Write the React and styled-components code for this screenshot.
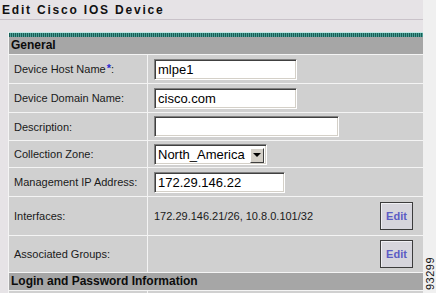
import React from "react";
import styled, { createGlobalStyle } from "styled-components";

const Global = createGlobalStyle`
  html, body {
    margin: 0;
    padding: 0;
    background: #efeeef;
  }
  body {
    font-family: "Liberation Sans", Arial, sans-serif;
    color: #111;
  }
`;

const Page = styled.div`
  display: flex;
  width: 436px;
  height: 293px;
  overflow: hidden;
`;

const Main = styled.div`
  width: 423px;
  background: #e6e3e6;
  overflow: hidden;
`;

const Side = styled.div`
  flex: 1;
  background: #f0f0f0;
  display: flex;
  align-items: flex-end;
  justify-content: center;
  padding-bottom: 3px;
`;

const FigNo = styled.span`
  writing-mode: vertical-rl;
  transform: rotate(180deg);
  font-size: 11px;
  letter-spacing: 0.5px;
  color: #111;
`;

const Title = styled.h1`
  margin: 0;
  height: 20px;
  box-sizing: border-box;
  padding: 3px 0 0 2px;
  font-size: 12px;
  font-weight: bold;
  letter-spacing: 1.8px;
  border-bottom: 1px solid #c9c2c9;
  color: #111;
`;

const Panel = styled.div`
  margin: 12px 0 0 8px;
  border-left: 1px solid #f4f4f4;
`;

const Stripe = styled.div`
  height: 4px;
  border-top: 1px solid #bfe6e2;
  background: repeating-linear-gradient(
    90deg,
    #175f57 0px,
    #175f57 1px,
    #4f9f96 1px,
    #4f9f96 2px
  );
`;

const Section = styled.div`
  height: 17px;
  background: #a6a6a6;
  border-bottom: 1px solid #f4f4f4;
  padding-left: 2px;
  font-size: 12px;
  font-weight: bold;
  line-height: 17px;
  color: #0c0c0c;
`;

const Row = styled.div`
  display: grid;
  grid-template-columns: 139px 1fr;
  height: ${(p) => p.$h}px;
  background: #d0d0d0;
  border-bottom: 1px solid #f4f4f4;
`;

const Label = styled.div`
  display: flex;
  align-items: center;
  padding-left: 5px;
  font-size: 11px;
  color: #1a1a1a;
  border-right: 1px solid #f4f4f4;
`;

const Star = styled.sup`
  color: #2a2ad0;
  font-size: 11px;
  font-weight: bold;
  line-height: 0;
  margin-left: 1px;
  position: relative;
  top: -1px;
`;

const Value = styled.div`
  display: flex;
  align-items: center;
  padding-left: 6px;
  padding-right: 10px;
  font-size: 11px;
  color: #1a1a1a;
`;

const Field = styled.div`
  width: ${(p) => p.$w}px;
  height: 21px;
  box-sizing: border-box;
  background: #fff;
  border: 1px solid;
  border-color: #808080 #fff #fff #808080;
  box-shadow: inset 1px 1px #404040, inset -1px -1px #d4d0c8;
  padding: 2px 0 0 3px;
  font-size: 13px;
  line-height: 16px;
  color: #000;
  display: flex;
  align-items: center;
`;

const SelectBox = styled(Field)`
  padding-right: 2px;
  justify-content: space-between;
`;

const Arrow = styled.div`
  width: 14px;
  height: 15px;
  box-sizing: border-box;
  background: #d4d0c8;
  border: 1px solid;
  border-color: #fff #404040 #404040 #fff;
  display: flex;
  align-items: center;
  justify-content: center;
  &::after {
    content: "";
    border-left: 4px solid transparent;
    border-right: 4px solid transparent;
    border-top: 4px solid #000;
  }
`;

const Text = styled.span`
  flex: 1;
`;

const EditButton = styled.button`
  width: 33px;
  height: 28px;
  background: #d6d5dc;
  border: 1px solid #3c3c3c;
  box-shadow: inset 1px 1px #f0f0f4;
  font-family: "Liberation Sans", Arial, sans-serif;
  font-size: 11px;
  font-weight: bold;
  color: #5b5bc4;
  padding: 0;
  margin-left: auto;
`;

export default function App() {
  return (
    <>
      <Global />
      <Page>
        <Main>
          <Title>Edit Cisco IOS Device</Title>
          <Panel>
            <Stripe />
            <Section>General</Section>
            <Row $h={28}>
              <Label>
                Device Host Name<Star>*</Star>:
              </Label>
              <Value>
                <Field $w={143}>mlpe1</Field>
              </Value>
            </Row>
            <Row $h={28}>
              <Label>Device Domain Name:</Label>
              <Value>
                <Field $w={143}>cisco.com</Field>
              </Value>
            </Row>
            <Row $h={27}>
              <Label>Description:</Label>
              <Value>
                <Field $w={185} />
              </Value>
            </Row>
            <Row $h={26}>
              <Label>Collection Zone:</Label>
              <Value>
                <SelectBox $w={113}>
                  <Text>North_America</Text>
                  <Arrow />
                </SelectBox>
              </Value>
            </Row>
            <Row $h={28}>
              <Label>Management IP Address:</Label>
              <Value>
                <Field $w={131}>172.29.146.22</Field>
              </Value>
            </Row>
            <Row $h={38}>
              <Label>Interfaces:</Label>
              <Value>
                <span>172.29.146.21/26, 10.8.0.101/32</span>
                <EditButton>Edit</EditButton>
              </Value>
            </Row>
            <Row $h={36}>
              <Label>Associated Groups:</Label>
              <Value>
                <EditButton>Edit</EditButton>
              </Value>
            </Row>
            <Section>Login and Password Information</Section>
            <Row $h={28}>
              <Label />
              <Value />
            </Row>
          </Panel>
        </Main>
        <Side>
          <FigNo>93299</FigNo>
        </Side>
      </Page>
    </>
  );
}
